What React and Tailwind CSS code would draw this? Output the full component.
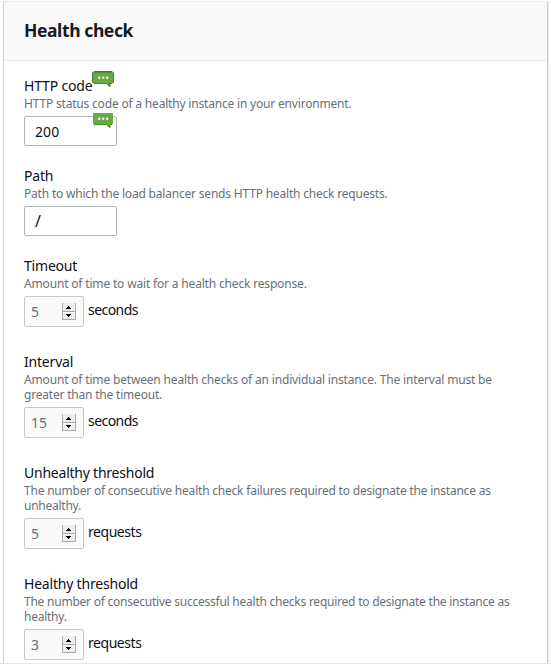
function Bubble({ className, outlined }) {
  return (
    <svg className={className} width={outlined ? 22 : 20} height={outlined ? 17 : 15} viewBox={outlined ? "0 0 22 17" : "1 1 20 15"}>
      <path
        d="M2 .5H20L21.5 2V11L20 12.5H18V15.5L14.5 12.5H2L.5 11V2Z"
        fill="#6aaa46"
        stroke={outlined ? "#47802a" : "#6aaa46"}
      />
      {outlined && <path d="M2 1H20" stroke="#3d7420" strokeWidth="1" />}
      <path d="M2 12.5H14.5L17.5 15.5V12.5H20" fill="none" stroke="#4c8b2c" />
      <rect x="6" y="5.5" width="2.4" height="2.4" rx=".8" fill="#e7f3df" />
      <rect x="10" y="5.5" width="2.4" height="2.4" rx=".8" fill="#e7f3df" />
      <rect x="14" y="5.5" width="2.4" height="2.4" rx=".8" fill="#e7f3df" />
    </svg>
  );
}

function Spinner() {
  return (
    <svg width="14" height="17" viewBox="0 0 14 17" shapeRendering="crispEdges">
      <rect width="14" height="17" fill="#ededed" />
      <path d="M.5 0V17M13.5 0V17M0 8.5H14M0 16.5H14" stroke="#adadad" />
      <path d="M1 9.5H13" stroke="#fafafa" />
      <path d="M6 3h1v1h1v1h1v1H4V5h1V4h1zM4 11h5v1H8v1H7v1H6v-1H5v-1H4z" fill="#000" />
    </svg>
  );
}

function Field({ label, labelClass, lines, children, bubble }) {
  return (
    <div>
      <div className="flex h-5 items-center text-[14px] leading-5 text-[#0d1015]">
        <span className={"relative " + labelClass}>
          {label}
          {bubble && <Bubble outlined className="absolute left-[68px] top-[-5px]" />}
        </span>
      </div>
      <div className="mb-[5px] text-[12px] leading-[15px] text-[#687078]">
        {lines.map(([text, cls]) => (
          <div key={text} className={"h-[15px] whitespace-nowrap " + cls}>
            {text}
          </div>
        ))}
      </div>
      {children}
    </div>
  );
}

function TextBox({ value, bubble }) {
  return (
    <div className="relative mb-5 flex h-[30px] w-[93px] items-center rounded-[2px] border border-[#aab7b8] bg-white pl-2.5 text-[14px] text-[#0d1015]">
      <span className={value === "/" ? "text-[16px]" : "tracking-[0.1px]"}>{value}</span>
      {bubble && <Bubble className="absolute left-[68px] top-[-4px]" />}
    </div>
  );
}

function NumberBox({ value, unit, unitClass }) {
  return (
    <div className="mb-[25px] flex h-[31px] items-center gap-1 text-[14px] text-[#0d1015]">
      <div className="flex h-[31px] w-[60px] items-center justify-between rounded-[2px] border border-[#c5c9ca] bg-[#fafafa] pl-1.5 pr-[7px] text-[#687078]">
        <span className="pb-px">{value}</span>
        <Spinner />
      </div>
      <span className={"-mt-1 " + unitClass}>{unit}</span>
    </div>
  );
}

export default function App() {
  return (
    <div className="h-[668px] w-[551px] overflow-hidden bg-white pt-px font-['Noto_Sans',sans-serif]">
      <div className="h-[663px] border-b border-[#e3e6e6]">
        <div className="ml-[3px] h-[662px] w-[545px] border-x border-t border-x-[#cdd1d2] border-t-[#eaeded] shadow-[1px_0_1px_#e8eaea]">
          <header className="flex h-[59px] items-center border-b border-[#eaeded] bg-[#fafafa] pl-5 text-[17.5px] font-bold text-[#16191f]">
            <span className="-mt-0.5 tracking-[-0.4px]">Health check</span>
          </header>
          <main className="pl-5 pt-[15px]">
            <Field label="HTTP code" bubble labelClass="tracking-[-0.17px]" lines={[["HTTP status code of a healthy instance in your environment.", "tracking-[-0.187px]"]]}>
              <TextBox value="200" bubble />
            </Field>
            <Field label="Path" labelClass="tracking-[-0.2px]" lines={[["Path to which the load balancer sends HTTP health check requests.", "tracking-[-0.195px]"]]}>
              <TextBox value="/" />
            </Field>
            <Field label="Timeout" labelClass="tracking-[-0.2px]" lines={[["Amount of time to wait for a health check response.", "tracking-[-0.17px]"]]}>
              <NumberBox value="5" unit="seconds" unitClass="tracking-[-0.55px]" />
            </Field>
            <Field label="Interval" labelClass="tracking-[-0.2px]" lines={[["Amount of time between health checks of an individual instance. The interval must be", "tracking-[-0.17px]"], ["greater than the timeout.", "tracking-[-0.2px]"]]}>
              <NumberBox value="15" unit="seconds" unitClass="tracking-[-0.55px]" />
            </Field>
            <Field label="Unhealthy threshold" labelClass="tracking-[-0.23px]" lines={[["The number of consecutive health check failures required to designate the instance as", "tracking-[-0.21px]"], ["unhealthy.", "tracking-[-0.25px]"]]}>
              <NumberBox value="5" unit="requests" unitClass="tracking-[-0.45px]" />
            </Field>
            <Field label="Healthy threshold" labelClass="tracking-[-0.2px]" lines={[["The number of consecutive successful health checks required to designate the instance as", "tracking-[-0.235px]"], ["healthy.", "tracking-[-0.25px]"]]}>
              <NumberBox value="3" unit="requests" unitClass="tracking-[-0.45px]" />
            </Field>
          </main>
        </div>
      </div>
    </div>
  );
}
